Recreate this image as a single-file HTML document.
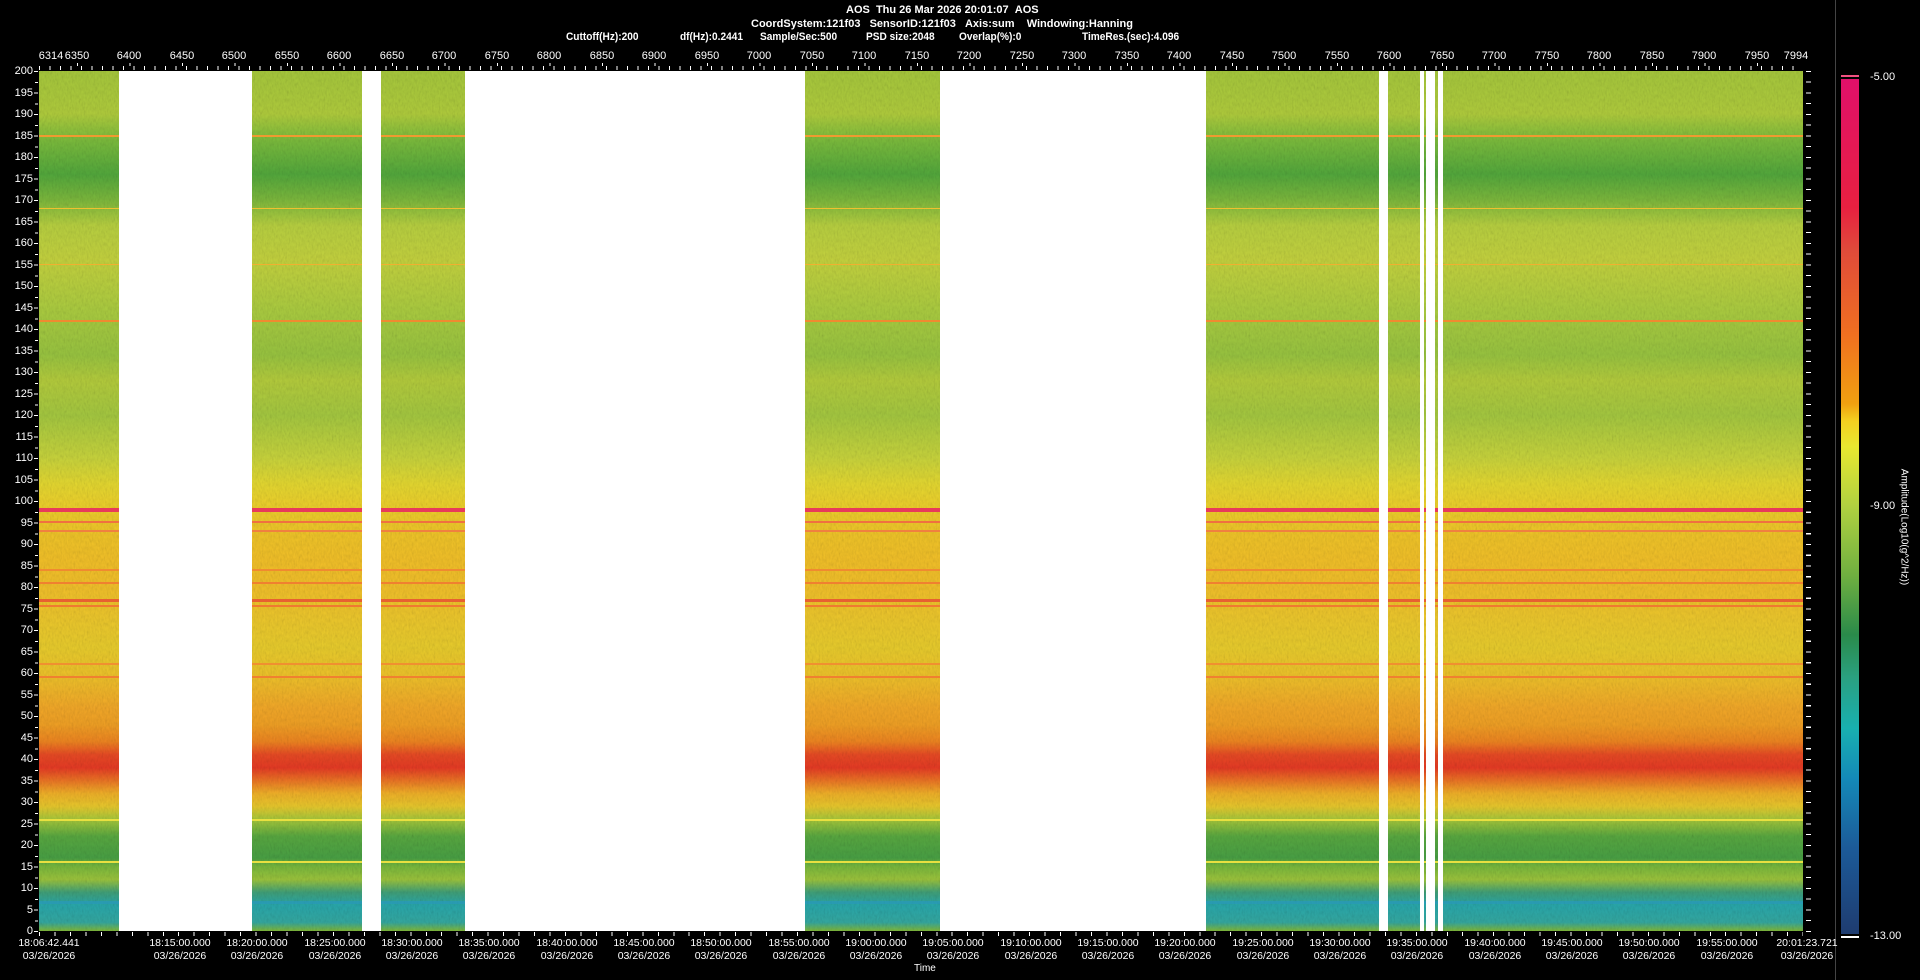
<!DOCTYPE html>
<html><head><meta charset="utf-8"><style>
*{margin:0;padding:0;box-sizing:border-box}
body{width:1920px;height:980px;background:#000;overflow:hidden;position:relative;font-family:"Liberation Sans",Arial,sans-serif;color:#fff}
.t{position:absolute;font-size:11px;white-space:nowrap}
.hd{position:absolute;font-size:11px;font-weight:bold;white-space:nowrap;transform:scaleX(.92);transform-origin:left}
.yl{position:absolute;right:1887px;font-size:11px;transform:translateY(-50%)}
.xl{position:absolute;top:50px;font-size:11px;transform:translateX(-50%)}
.bl{position:absolute;top:937px;font-size:10.5px;text-align:center;line-height:13px;transform:translateX(-50%)}
#plot{position:absolute;left:39px;top:71px;width:1764px;height:860px;overflow:hidden;
background:linear-gradient(to bottom,
#a6c83c 0%,#b0cc3c 5%,#7cbc3c 8%,#52a83c 12%,#7cb83c 15%,#b8d040 18%,#c4d23e 22%,#aacc40 28%,#98c440 33%,#b4cc3c 36%,#a4c840 40%,#c8d43c 45%,#e4d830 48%,#ecd22c 50%,#f0c428 54%,#f2c028 57%,#f2c02a 60%,#ecc82c 64%,#e8cc2c 67%,#eec42a 70%,#f2a828 74%,#f0a024 76%,#ee8420 78%,#e84a24 79.5%,#e63a24 81%,#ec7424 82.5%,#f0b028 84%,#e8c82c 85.5%,#a8c83a 87%,#58a840 89%,#48a044 91.5%,#78b83c 92.5%,#9cc43c 94%,#40a078 95.5%,#28a8ac 97%,#34a8a0 99%,#80b838 100%);}
.g{position:absolute;top:0;height:860px;background:#fff}
.ln{position:absolute;left:0;width:100%}
.ax{position:absolute}
</style></head><body>
<div style="position:absolute;left:1835px;top:0;width:1px;height:980px;background:#444"></div>
<div class="t" style="left:846px;top:4px;font-weight:bold">AOS&nbsp;&nbsp;Thu 26 Mar 2026 20:01:07&nbsp;&nbsp;AOS</div>
<div class="t" style="left:751px;top:18px;font-weight:bold">CoordSystem:121f03&nbsp;&nbsp;&nbsp;SensorID:121f03&nbsp;&nbsp;&nbsp;Axis:sum&nbsp;&nbsp;&nbsp;&nbsp;Windowing:Hanning</div>
<div class="hd" style="left:566px;top:31px">Cuttoff(Hz):200</div>
<div class="hd" style="left:680px;top:31px">df(Hz):0.2441</div>
<div class="hd" style="left:760px;top:31px">Sample/Sec:500</div>
<div class="hd" style="left:866px;top:31px">PSD size:2048</div>
<div class="hd" style="left:959px;top:31px">Overlap(%):0</div>
<div class="hd" style="left:1082px;top:31px">TimeRes.(sec):4.096</div>

<div class="ax" style="left:39px;top:66px;width:1764px;height:4px;background:repeating-linear-gradient(to right,#fff 0 1px,transparent 1px 10.5px)"></div>
<div class="ax" style="left:39px;top:63px;width:1764px;height:3px;background:repeating-linear-gradient(to right,transparent 0 37.8px,#fff 37.8px 38.8px,transparent 38.8px 52.5px)"></div>
<div class="xl" style="left:51px">6314</div><div class="xl" style="left:77px">6350</div><div class="xl" style="left:129px">6400</div><div class="xl" style="left:182px">6450</div><div class="xl" style="left:234px">6500</div><div class="xl" style="left:287px">6550</div><div class="xl" style="left:339px">6600</div><div class="xl" style="left:392px">6650</div><div class="xl" style="left:444px">6700</div><div class="xl" style="left:497px">6750</div><div class="xl" style="left:549px">6800</div><div class="xl" style="left:602px">6850</div><div class="xl" style="left:654px">6900</div><div class="xl" style="left:707px">6950</div><div class="xl" style="left:759px">7000</div><div class="xl" style="left:812px">7050</div><div class="xl" style="left:864px">7100</div><div class="xl" style="left:917px">7150</div><div class="xl" style="left:969px">7200</div><div class="xl" style="left:1022px">7250</div><div class="xl" style="left:1074px">7300</div><div class="xl" style="left:1127px">7350</div><div class="xl" style="left:1179px">7400</div><div class="xl" style="left:1232px">7450</div><div class="xl" style="left:1284px">7500</div><div class="xl" style="left:1337px">7550</div><div class="xl" style="left:1389px">7600</div><div class="xl" style="left:1442px">7650</div><div class="xl" style="left:1494px">7700</div><div class="xl" style="left:1547px">7750</div><div class="xl" style="left:1599px">7800</div><div class="xl" style="left:1652px">7850</div><div class="xl" style="left:1704px">7900</div><div class="xl" style="left:1757px">7950</div><div class="xl" style="left:1796px">7994</div>

<div class="ax" style="left:34px;top:71px;width:4px;height:861px;background:repeating-linear-gradient(to bottom,#fff 0 1px,transparent 1px 21.5px)"></div>
<div class="ax" style="left:35px;top:81.75px;width:3px;height:850px;background:repeating-linear-gradient(to bottom,#fff 0 1px,transparent 1px 21.5px)"></div>
<div class="ax" style="left:1806px;top:71px;width:5px;height:861px;background:repeating-linear-gradient(to bottom,#fff 0 1px,transparent 1px 10.75px)"></div>

<div class="yl" style="top:71px">200</div><div class="yl" style="top:92.5px">195</div><div class="yl" style="top:114px">190</div><div class="yl" style="top:135.5px">185</div><div class="yl" style="top:157px">180</div><div class="yl" style="top:178.5px">175</div><div class="yl" style="top:200px">170</div><div class="yl" style="top:221.5px">165</div><div class="yl" style="top:243px">160</div><div class="yl" style="top:264.5px">155</div><div class="yl" style="top:286px">150</div><div class="yl" style="top:307.5px">145</div><div class="yl" style="top:329px">140</div><div class="yl" style="top:350.5px">135</div><div class="yl" style="top:372px">130</div><div class="yl" style="top:393.5px">125</div><div class="yl" style="top:415px">120</div><div class="yl" style="top:436.5px">115</div><div class="yl" style="top:458px">110</div><div class="yl" style="top:479.5px">105</div><div class="yl" style="top:501px">100</div><div class="yl" style="top:522.5px">95</div><div class="yl" style="top:544px">90</div><div class="yl" style="top:565.5px">85</div><div class="yl" style="top:587px">80</div><div class="yl" style="top:608.5px">75</div><div class="yl" style="top:630px">70</div><div class="yl" style="top:651.5px">65</div><div class="yl" style="top:673px">60</div><div class="yl" style="top:694.5px">55</div><div class="yl" style="top:716px">50</div><div class="yl" style="top:737.5px">45</div><div class="yl" style="top:759px">40</div><div class="yl" style="top:780.5px">35</div><div class="yl" style="top:802px">30</div><div class="yl" style="top:823.5px">25</div><div class="yl" style="top:845px">20</div><div class="yl" style="top:866.5px">15</div><div class="yl" style="top:888px">10</div><div class="yl" style="top:909.5px">5</div><div class="yl" style="top:931px">0</div>

<div id="plot">
<svg width="1764" height="860" style="position:absolute;left:0;top:0;opacity:.35;mix-blend-mode:multiply">
<filter id="n"><feTurbulence type="fractalNoise" baseFrequency="0.6 0.25" numOctaves="2" seed="3"/><feColorMatrix type="saturate" values="0"/></filter>
<rect width="1764" height="860" filter="url(#n)"/></svg>
<div class="ln" style="top:64px;height:2px;background:#f09a30"></div>
<div class="ln" style="top:249px;height:2px;background:#f08a30"></div>
<div class="ln" style="top:137px;height:1px;background:#f0c030"></div>
<div class="ln" style="top:193px;height:1px;background:#f0b030"></div>
<div class="ln" style="top:437px;height:4px;background:#e83a5a"></div>
<div class="ln" style="top:450px;height:2px;background:#f07040"></div>
<div class="ln" style="top:459px;height:2px;background:#f08040"></div>
<div class="ln" style="top:498px;height:2px;background:#f08a30"></div>
<div class="ln" style="top:511px;height:2px;background:#f08030"></div>
<div class="ln" style="top:528px;height:3px;background:#e86030"></div>
<div class="ln" style="top:534px;height:2px;background:#f07a30"></div>
<div class="ln" style="top:592px;height:2px;background:#f09030"></div>
<div class="ln" style="top:605px;height:2px;background:#f08030"></div>
<div class="ln" style="top:748px;height:2px;background:#e8e040"></div>
<div class="ln" style="top:790px;height:2px;background:#e8e040"></div>
<div class="ln" style="top:830px;height:3px;background:#2898c0;opacity:.6"></div>
<div class="g" style="left:80px;width:133px"></div>
<div class="g" style="left:323px;width:19px"></div>
<div class="g" style="left:426px;width:340px"></div>
<div class="g" style="left:901px;width:266px"></div>
<div class="g" style="left:1340px;width:9px"></div>
<div class="g" style="left:1381px;width:4px"></div>
<div class="g" style="left:1387px;width:9px"></div>
<div class="g" style="left:1399px;width:5px"></div>
</div>

<div class="ax" style="left:39px;top:932px;width:1764px;height:4px;background:repeating-linear-gradient(to right,#fff 0 1px,transparent 1px 15.47px)"></div>
<div class="bl" style="left:49px">18:06:42.441<br>03/26/2026</div>
<div class="bl" style="left:180px">18:15:00.000<br>03/26/2026</div>
<div class="bl" style="left:257px">18:20:00.000<br>03/26/2026</div>
<div class="bl" style="left:335px">18:25:00.000<br>03/26/2026</div>
<div class="bl" style="left:412px">18:30:00.000<br>03/26/2026</div>
<div class="bl" style="left:489px">18:35:00.000<br>03/26/2026</div>
<div class="bl" style="left:567px">18:40:00.000<br>03/26/2026</div>
<div class="bl" style="left:644px">18:45:00.000<br>03/26/2026</div>
<div class="bl" style="left:721px">18:50:00.000<br>03/26/2026</div>
<div class="bl" style="left:799px">18:55:00.000<br>03/26/2026</div>
<div class="bl" style="left:876px">19:00:00.000<br>03/26/2026</div>
<div class="bl" style="left:953px">19:05:00.000<br>03/26/2026</div>
<div class="bl" style="left:1031px">19:10:00.000<br>03/26/2026</div>
<div class="bl" style="left:1108px">19:15:00.000<br>03/26/2026</div>
<div class="bl" style="left:1185px">19:20:00.000<br>03/26/2026</div>
<div class="bl" style="left:1263px">19:25:00.000<br>03/26/2026</div>
<div class="bl" style="left:1340px">19:30:00.000<br>03/26/2026</div>
<div class="bl" style="left:1417px">19:35:00.000<br>03/26/2026</div>
<div class="bl" style="left:1495px">19:40:00.000<br>03/26/2026</div>
<div class="bl" style="left:1572px">19:45:00.000<br>03/26/2026</div>
<div class="bl" style="left:1649px">19:50:00.000<br>03/26/2026</div>
<div class="bl" style="left:1727px">19:55:00.000<br>03/26/2026</div>
<div class="bl" style="left:1807px">20:01:23.721<br>03/26/2026</div>
<div class="t" style="left:914px;top:963px;font-size:10px">Time</div>

<div style="position:absolute;left:1841px;top:75px;width:18px;height:2px;background:#f05080"></div>
<div style="position:absolute;left:1841px;top:79px;width:18px;height:855px;background:linear-gradient(to bottom,#e0106a 0%,#e82040 15%,#e04a3a 20%,#f07020 30%,#f0a010 38%,#f4d020 40%,#e8e830 43%,#b0d040 50%,#70b040 58%,#2a8a4a 65%,#2aa080 70%,#18b0b0 76%,#1488b8 82%,#1c5a98 90%,#1e3c70 100%)"></div>
<div style="position:absolute;left:1841px;top:936px;width:18px;height:2px;background:#fff"></div>
<div class="t" style="left:1870px;top:71px">-5.00</div>
<div class="t" style="left:1870px;top:500px">-9.00</div>
<div class="t" style="left:1870px;top:930px">-13.00</div>
<div class="t" style="left:1904px;top:527px;font-size:10px;transform:translate(-50%,-50%) rotate(90deg)">Amplitude(Log10(g^2/Hz))</div>
</body></html>
